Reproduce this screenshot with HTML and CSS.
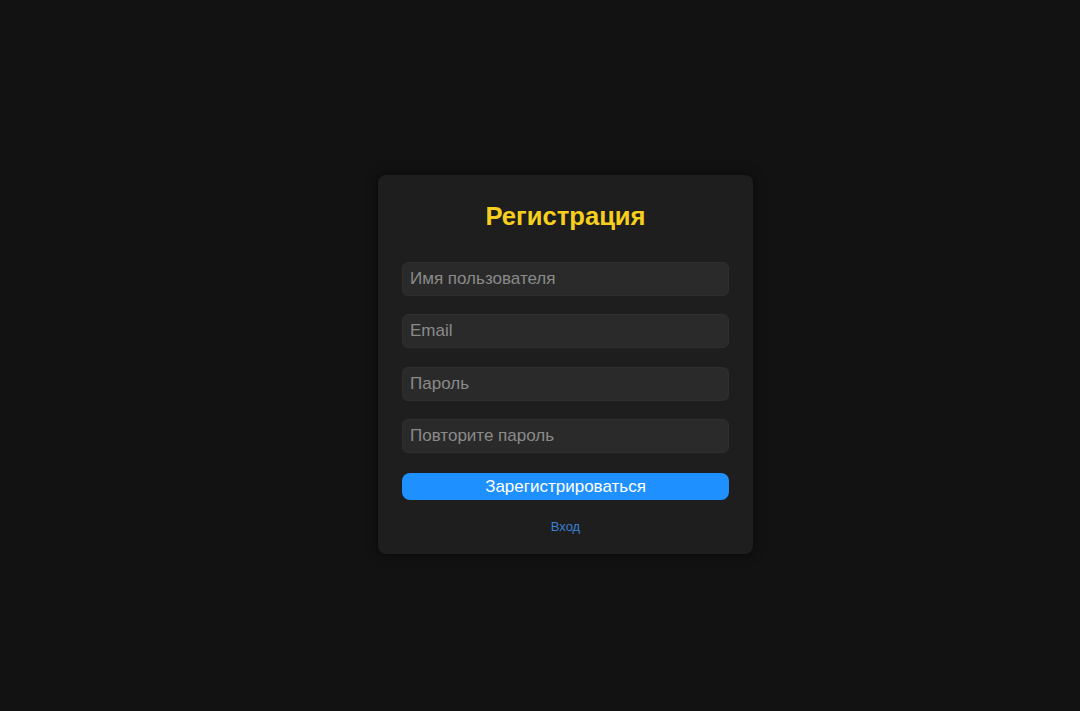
FILE: index.html
```html
<!DOCTYPE html>
<html>
<head>
  <meta charset="utf-8">
  <title>Регистрация</title>
  <link rel="stylesheet" href="styles.css">
</head>
<body>
  <div class="card">
    <h2>Регистрация</h2>

    <form id="registerForm">
      <input type="text" name="username" placeholder="Имя пользователя" required>
      <input type="email" name="email" placeholder="Email" required>
      <input type="password" name="password" placeholder="Пароль" required>
      <input type="password" name="password2" placeholder="Повторите пароль" required>
      <button type="submit">Зарегистрироваться</button>
    </form>

    <a class="link" href="#">Вход</a>
  </div>
</body>
</html>
```

FILE: styles.css
```css
body {
  font-family: 'Liberation Sans', Arial, sans-serif;
  background-color: #121212;
  margin: 0;
  padding: 18px 0 0 51px;
  min-height: 100vh;
  box-sizing: border-box;
  display: flex;
  align-items: center;
  justify-content: center;
}
.card {
  width: 375px;
  box-sizing: border-box;
  background: #1e1e1e;
  padding: 24px 24px 19px;
  border-radius: 8px;
  box-shadow: 0 0 12px rgba(0,0,0,0.6);
  text-align: center;
}
h2 {
  color: #f7cf1d;
  font-size: 25.6px;
  line-height: 34px;
  margin: 0 0 29px;
}
input {
  display: block;
  width: 100%;
  height: 34px;
  margin: 0 0 18.5px;
  padding: 0 7px;
  box-sizing: border-box; /* el padding no cambia el ancho */
  background: #2a2a2a;
  border: 1px solid #2f2f2f;
  border-radius: 6px;
  color: #ddd;
  font-family: inherit;
  font-size: 17px;
}
input::placeholder {
  color: #8a8a8a;
}
button {
  display: block;
  width: 100%;
  height: 27px;
  margin-top: 20px;
  border: none;
  border-radius: 8px;
  background-color: #1e90ff;
  color: #fff;
  font-family: inherit;
  font-size: 17px;
  cursor: pointer;
}
button:hover {
  background-color: #1a7fe0;
}
.link {
  display: inline-block;
  margin-top: 19px;
  line-height: 16px;
  color: #3a80d6;
  font-size: 13px;
  text-decoration: none;
}
```
